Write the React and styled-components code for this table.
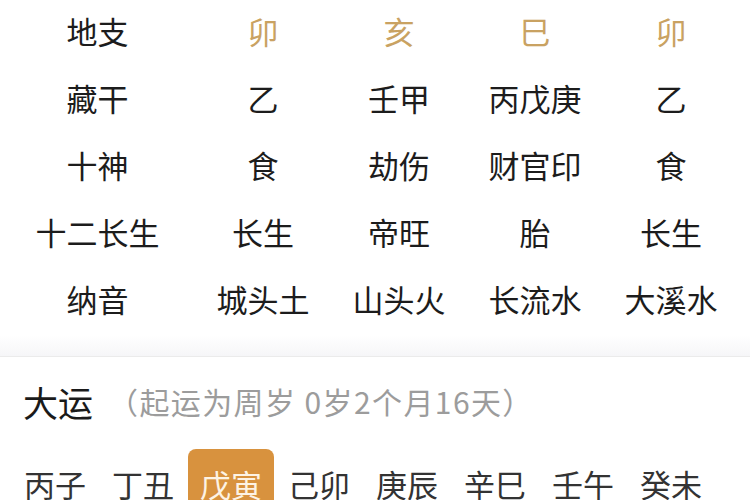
import React from 'react';
import styled, {createGlobalStyle} from "styled-components";

const GlobalStyle = createGlobalStyle`
  body {
    margin: 0;
    background: #ffffff;
    font-family: "Noto Sans CJK SC", "Noto Sans", sans-serif;
    color: #222222;
  }
`;

const rows = [
    {label: "地支", cells: ["卯", "亥", "巳", "卯"], gold: true},
    {label: "藏干", cells: ["乙", "壬甲", "丙戊庚", "乙"]},
    {label: "十神", cells: ["食", "劫伤", "财官印", "食"]},
    {label: "十二长生", cells: ["长生", "帝旺", "胎", "长生"]},
    {label: "纳音", cells: ["城头土", "山头火", "长流水", "大溪水"]},
];

const luck = ["丙子", "丁丑", "戊寅", "己卯", "庚辰", "辛巳", "壬午", "癸未"];

const App = () => {
    return (
        <Page>
            <GlobalStyle/>
            <Table>
                {rows.map((row) => (
                    <Row key={row.label}>
                        <Label>{row.label}</Label>
                        {row.cells.map((c, i) => (
                            <Cell key={i} $gold={row.gold}>{c}</Cell>
                        ))}
                    </Row>
                ))}
            </Table>
            <Divider/>
            <Section>
                <Heading>
                    <Title>大运</Title>
                    <Sub>（起运为周岁 0岁2个月16天）</Sub>
                </Heading>
                <Luck>
                    {luck.map((item, i) => (
                        <LuckItem key={item} $active={i === 2}>{item}</LuckItem>
                    ))}
                </Luck>
            </Section>
        </Page>
    );
}

const Page = styled.div`
  width: 750px;
  height: 500px;
  overflow: hidden;
  background: #ffffff;
`;

const Table = styled.div`
  display: flex;
  flex-direction: column;
`;

const Row = styled.div`
  display: grid;
  grid-template-columns: 195px repeat(4, 136px);
  height: 67px;
  padding-bottom: 6px;
  box-sizing: border-box;
  align-items: center;
`;

const Label = styled.div`
  text-align: center;
  font-size: 31px;
  line-height: 1;
  color: #1c1c1c;
`;

const Cell = styled.div`
  text-align: center;
  font-size: 31px;
  line-height: 1;
  color: ${props => props.$gold ? "#c9a262" : "#1c1c1c"};
`;

const Divider = styled.div`
  height: 21px;
  background: linear-gradient(#ffffff, #f6f6f8);
  border-bottom: 1px solid #ebebeb;
`;

const Section = styled.div`
  display: flex;
  flex-direction: column;
`;

const Heading = styled.div`
  display: flex;
  align-items: center;
  height: 92px;
  padding-left: 23px;
  padding-bottom: 4px;
  box-sizing: border-box;
`;

const Title = styled.span`
  font-size: 35px;
  line-height: 1;
  color: #1a1a1a;
`;

const Sub = styled.span`
  font-size: 30px;
  line-height: 1;
  margin-left: 15px;
  letter-spacing: 1.4px;
  color: #9c9c9c;
`;

const Luck = styled.div`
  display: flex;
  padding-left: 12px;
`;

const LuckItem = styled.div`
  width: 86px;
  margin-right: 2px;
  height: 70px;
  padding-top: 16px;
  box-sizing: border-box;
  text-align: center;
  font-size: 31px;
  line-height: 1.2;
  border-radius: 8px;
  color: ${props => props.$active ? "#fdf3e4" : "#333333"};
  background: ${props => props.$active ? "#d8923e" : "transparent"};
`;

export default App;
